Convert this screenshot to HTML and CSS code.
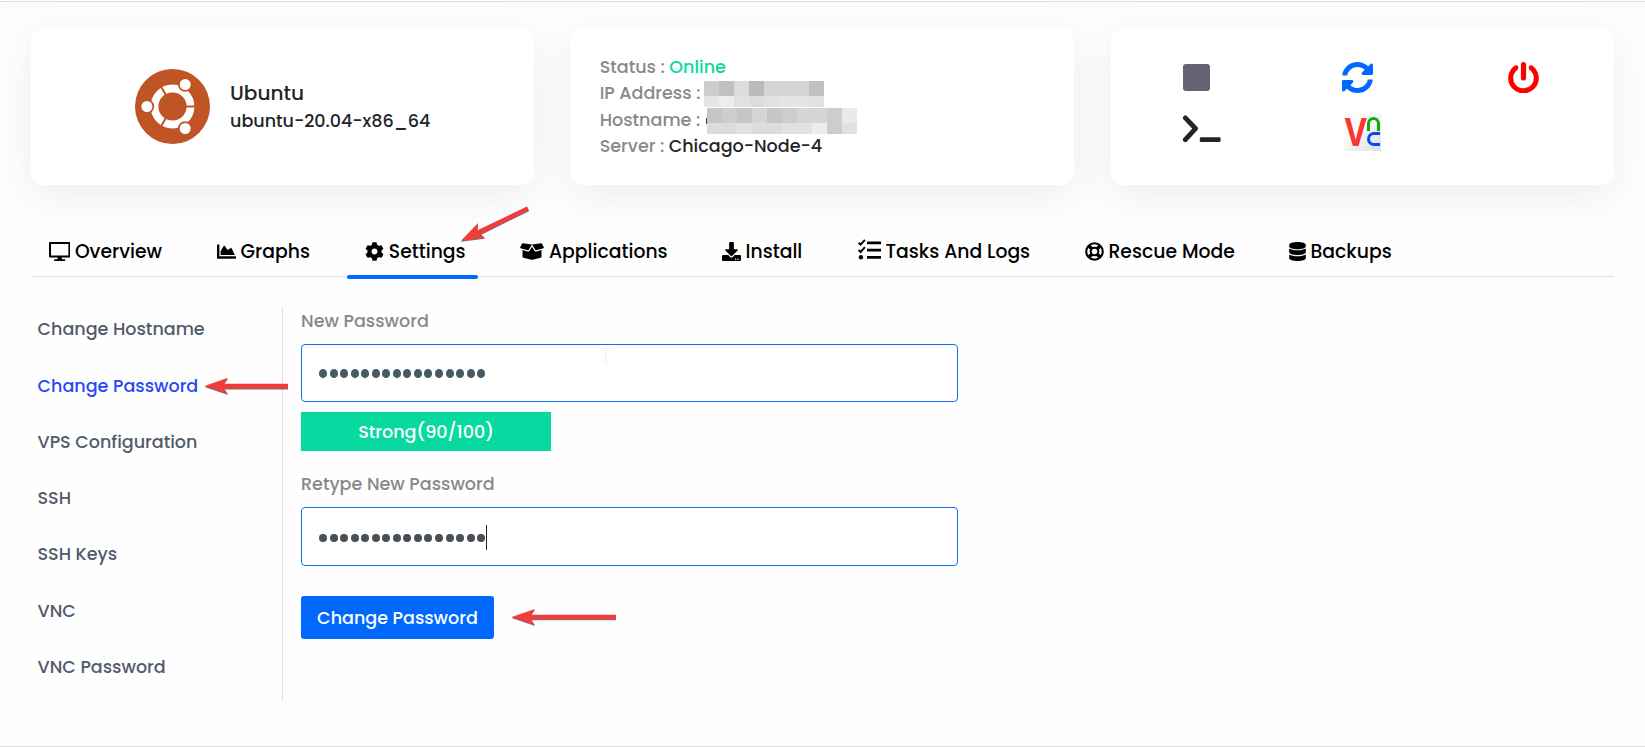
FILE: index.html
```
<!DOCTYPE html>
<html lang="en">
<head>
<meta charset="utf-8">
<title>VPS Settings</title>
<link rel="stylesheet" href="styles.css">
</head>
<body>
<div class="topline"></div>
<main class="page">
  <section class="cards">
    <article class="card os-card">
      <svg class="os-logo" viewBox="0 0 75 75">
        <circle cx="37.500" cy="37.500" r="37.500" fill="#bf5425"/>
        <circle cx="37.500" cy="37.500" r="18" fill="none" stroke="#fff" stroke-width="7.800"/>
        <path d="M37.500 37.500H62M37.500 37.500L25.250 16.300M37.500 37.500L25.250 58.700" stroke="#bf5425" stroke-width="2"/>
        <g fill="#fff" stroke="#bf5425" stroke-width="1.800">
          <circle cx="11.900" cy="37.500" r="6.400"/><circle cx="50.200" cy="15.500" r="6.400"/><circle cx="50.200" cy="59.500" r="6.400"/>
        </g>
      </svg>
      <div>
        <div class="os-name">Ubuntu</div>
        <div class="os-version">ubuntu-20.04-x86_64</div>
      </div>
    </article>

    <article class="card info-card">
      <div class="row"><span class="key key-status">Status :</span><span class="online">Online</span></div>
      <div class="row"><span class="key key-ip">IP Address :</span>
        <span class="mosaic m-ip"><i class="g3"></i><i class="g1"></i><i class="g5"></i><i class="g0"></i><i class="g4"></i><i class="g4"></i><i class="g4"></i><i class="g1"></i><i class="g7"></i><i class="g9"></i><i class="g6"></i><i class="g5"></i><i class="g6"></i><i class="g7"></i><i class="g7"></i><i class="g6"></i></span></div>
      <div class="row"><span class="key key-host">Hostname :</span>
        <span class="mosaic m-host"><i class="g2"></i><i class="g3"></i><i class="g2"></i><i class="g4"></i><i class="g2"></i><i class="g3"></i><i class="g4"></i><i class="g4"></i><i class="g3"></i><i class="g8"></i><i class="g5"></i><i class="g5"></i><i class="g6"></i><i class="g5"></i><i class="g5"></i><i class="g6"></i><i class="g6"></i><i class="g9"></i><i class="g3"></i><i class="g6"></i></span></div>
      <div class="row"><span class="key key-server">Server :</span><span class="server">Chicago-Node-4</span></div>
    </article>

    <article class="card actions">
      <span class="stop"></span>
      <svg class="sync" viewBox="8 8 496 496"><path fill="#0168fe" d="M370.720 133.280C339.458 104.008 298.888 87.962 255.848 88c-77.458.068-144.328 53.178-162.791 126.850-1.344 5.363-6.122 9.150-11.651 9.150H24.103c-7.498 0-13.194-6.807-11.807-14.176C33.933 94.924 134.813 8 256 8c66.448 0 126.791 26.136 171.315 68.685L463.030 40.970C478.149 25.851 504 36.559 504 57.941V192c0 13.255-10.745 24-24 24H345.941c-21.382 0-32.090-25.851-16.971-40.971l41.750-41.749zM32 296h134.059c21.382 0 32.090 25.851 16.971 40.971l-41.750 41.750c31.262 29.273 71.835 45.319 114.876 45.280 77.418-.070 144.315-53.144 162.787-126.849 1.344-5.363 6.122-9.150 11.651-9.150h57.304c7.498 0 13.194 6.807 11.807 14.176C478.067 417.076 377.187 504 256 504c-66.448 0-126.791-26.136-171.315-68.685L48.970 471.030C33.851 486.149 8 475.441 8 454.059V320c0-13.255 10.745-24 24-24z"/></svg>
      <svg class="power" viewBox="0 0 31 31" fill="none" stroke="#fe0000"><path d="M8 5.700A12.800 12.800 0 1 0 23 5.700" stroke-width="5"/><circle cx="8" cy="5.700" r=".9" fill="#fe0000" stroke-width="3"/><circle cx="23" cy="5.700" r=".9" fill="#fe0000" stroke-width="3"/><path d="M15.500 2.600v13.400" stroke-width="5.200" stroke-linecap="round"/></svg>
      <svg class="terminal" viewBox="0 0 40 29" fill="none" stroke="#212529" stroke-width="5"><path d="M3 3L13.500 14 3 25.500" stroke-linecap="round" stroke-linejoin="round"/><rect x="18" y="23" width="21.500" height="5" rx="1.300" fill="#212529" stroke="none"/></svg>
      <span class="vnc"><svg viewBox="0 0 37 38"><text x="0.700" y="33" textLength="22" lengthAdjust="spacingAndGlyphs">V</text></svg><i class="arch-n"></i><i class="arch-c"></i></span>
    </article>
  </section>

  <nav class="tabs">
    <a class="tab t-overview"><svg class="w-desktop" viewBox="0 0 576 512"><path fill="none" stroke="#000" stroke-width="54" stroke-linejoin="round" d="M27 27H549V390H27z"/><path d="M240 400h96l16 64h64q24 0 24 24t-24 24H160q-24 0-24-24t24-24h64z"/></svg><span>Overview</span></a>
    <a class="tab t-graphs"><svg class="w-std" viewBox="0 0 512 512"><path d="M500 384c6.600 0 12 5.400 12 12v40c0 6.600-5.400 12-12 12H12c-6.600 0-12-5.400-12-12V76c0-6.600 5.400-12 12-12h40c6.600 0 12 5.400 12 12v308h436zM372.700 159.500L288 216l-85.300-113.700c-5.100-6.800-15.500-6.300-19.900 1L96 248v104h384l-89.900-187.800c-3.200-6.500-11.400-8.700-17.400-4.700z"/></svg><span>Graphs</span></a>
    <a class="tab t-settings active"><svg class="w-std" viewBox="0 0 512 512"><path d="M487.400 315.700l-42.600-24.600c4.300-23.200 4.300-47 0-70.200l42.600-24.600c4.900-2.800 7.100-8.600 5.500-14-11.100-35.600-30-67.800-54.700-94.600-3.800-4.100-10-5.100-14.800-2.300L380.800 110c-17.900-15.400-38.500-27.300-60.800-35.100V25.800c0-5.600-3.900-10.500-9.400-11.700-36.700-8.200-74.300-7.800-109.200 0-5.500 1.200-9.400 6.100-9.400 11.700V75c-22.200 7.900-42.800 19.800-60.800 35.100L88.700 85.500c-4.900-2.800-11-1.900-14.800 2.300-24.700 26.700-43.600 58.900-54.700 94.600-1.700 5.400.6 11.200 5.500 14L67.300 221c-4.300 23.200-4.300 47 0 70.200l-42.600 24.600c-4.900 2.800-7.100 8.600-5.500 14 11.100 35.600 30 67.800 54.700 94.600 3.800 4.100 10 5.100 14.800 2.300l42.600-24.600c17.900 15.400 38.500 27.300 60.800 35.100v49.200c0 5.600 3.900 10.500 9.400 11.700 36.700 8.200 74.300 7.800 109.200 0 5.500-1.200 9.400-6.100 9.400-11.700v-49.200c22.200-7.900 42.800-19.800 60.800-35.100l42.600 24.600c4.900 2.800 11 1.900 14.800-2.300 24.700-26.700 43.600-58.900 54.700-94.600 1.500-5.500-.7-11.300-5.600-14.100zM256 336c-44.100 0-80-35.900-80-80s35.900-80 80-80 80 35.900 80 80-35.900 80-80 80z"/></svg><span>Settings</span></a>
    <a class="tab t-apps"><svg class="w-box" viewBox="0 0 640 512"><path d="M425.700 256c-16.900 0-32.800-9-41.400-23.400L320 126l-64.200 106.600c-8.700 14.500-24.600 23.500-41.500 23.500-4.500 0-9-.6-13.300-1.900L64 215v178c0 14.700 10 27.500 24.200 31l216.200 54.100c10.200 2.500 20.900 2.500 31 0L551.800 424c14.200-3.600 24.200-16.400 24.200-31V215l-137 39.100c-4.300 1.300-8.800 1.900-13.300 1.900zm212.600-112.200L586.800 41c-3.100-6.200-9.800-9.800-16.700-8.900L320 64l91.700 152.100c3.800 6.300 11.400 9.300 18.500 7.300l197.900-56.500c9.900-2.900 14.700-13.900 10.200-23.100zM53.200 41L1.700 143.800c-4.600 9.200.3 20.200 10.100 23l197.900 56.500c7.100 2 14.700-1 18.500-7.300L320 64 69.800 32.100c-6.900-.8-13.500 2.700-16.600 8.900z"/></svg><span>Applications</span></a>
    <a class="tab t-install"><svg class="w-std" viewBox="0 0 512 512"><path d="M216 0h80c13.300 0 24 10.700 24 24v168h87.700c17.800 0 26.700 21.500 14.100 34.100L269.700 378.300c-7.500 7.500-19.800 7.500-27.300 0L90.100 226.100c-12.600-12.600-3.700-34.100 14.100-34.100H192V24c0-13.300 10.700-24 24-24zm296 376v112c0 13.300-10.700 24-24 24H24c-13.300 0-24-10.700-24-24V376c0-13.300 10.700-24 24-24h146.700l49 49c20.100 20.100 52.500 20.100 72.600 0l49-49H488c13.300 0 24 10.700 24 24zm-124 88c0-11-9-20-20-20s-20 9-20 20 9 20 20 20 20-9 20-20zm64 0c0-11-9-20-20-20s-20 9-20 20 9 20 20 20 20-9 20-20z"/></svg><span>Install</span></a>
    <a class="tab t-tasks"><svg class="w-tasks" viewBox="0 0 23 22"><path fill="none" stroke="#000" stroke-width="2" d="M.6 3.600l2 2L6.900.8M.6 11l2 2 4.300-4.800"/><circle cx="2.900" cy="18.200" r="2.200"/><path d="M9 2.500h14v2.800H9zM9 9.800h14v2.800H9zM9 17h14v2.800H9z"/></svg><span>Tasks And Logs</span></a>
    <a class="tab t-rescue"><svg class="w-ring" viewBox="0 0 20 20" fill="none" stroke="#000"><circle cx="10" cy="10" r="8.700" stroke-width="2.200"/><circle cx="10" cy="10" r="4" stroke-width="2.200"/><path stroke-width="3.800" d="M3.900 3.900l3.300 3.300M16.100 3.900l-3.300 3.300M3.900 16.100l3.300-3.300M16.100 16.100l-3.300-3.300"/></svg><span>Rescue Mode</span></a>
    <a class="tab t-backups"><svg class="w-db" viewBox="0 0 448 512"><path d="M448 73.143v45.714C448 159.143 347.667 192 224 192S0 159.143 0 118.857V73.143C0 32.857 100.333 0 224 0s224 32.857 224 73.143zM448 176v102.857C448 319.143 347.667 352 224 352S0 319.143 0 278.857V176c48.125 33.143 136.208 48.572 224 48.572S399.874 209.143 448 176zm0 160v102.857C448 479.143 347.667 512 224 512S0 479.143 0 438.857V336c48.125 33.143 136.208 48.572 224 48.572S399.874 369.143 448 336z"/></svg><span>Backups</span></a>
  </nav>

  <section class="content">
    <ul class="side">
      <li>Change Hostname</li>
      <li class="current">Change Password</li>
      <li>VPS Configuration</li>
      <li>SSH</li>
      <li>SSH Keys</li>
      <li>VNC</li>
      <li>VNC Password</li>
    </ul>
    <form class="form">
      <label>New Password</label>
      <div class="field"><span class="dots"><i></i><i></i><i></i><i></i><i></i><i></i><i></i><i></i><i></i><i></i><i></i><i></i><i></i><i></i><i></i><i></i></span></div>
      <div class="strength">Strong(90/100)</div>
      <label>Retype New Password</label>
      <div class="field second"><span class="dots"><i></i><i></i><i></i><i></i><i></i><i></i><i></i><i></i><i></i><i></i><i></i><i></i><i></i><i></i><i></i><i></i></span><span class="caret"></span></div>
      <button type="button" class="submit">Change Password</button>
    </form>
  </section>
</main>
<footer class="bottomline"></footer>

<svg class="marks" viewBox="0 0 1645 747">
  <path fill="none" stroke="#f0f0f0" d="M602 348.500h2.500l1 1 1-1h2.500M605.500 349v14M602 363.500h2.500l1-1 1 1h2.500"/>
  <g class="arrow">
    <path d="M461 240.800L478 223 477.500 230.300 527 206.500 529 210.200 480.500 234.200 485 237.800z"/>
    <path d="M204.500 386L228 377.700 224 383.700H288V388.500H224L228 394z"/>
    <path d="M511.500 617L535 609 531 614.700H616V619.300H531L535 625z"/>
  </g>
</svg>
</body>
</html>
```
FILE: styles.css
```
* { box-sizing: border-box; }
body {
  margin: 0;
  height: 747px;
  overflow: hidden;
  display: flex;
  flex-direction: column;
  background: #fefefe;
  color: #212529;
  font: 500 17.550px/26px Poppins, Inter, sans-serif;
}
.topline { height: 2px; flex: none; border-bottom: 1px solid #dcdede; box-shadow: 0 2px 8px rgba(0, 0, 0, .06); }
.bottomline { height: 1px; background: #dcdfe3; }
.page { flex: 1; padding: 26px 31px 0; }

.cards { display: grid; grid-template-columns: repeat(3, 503px); gap: 37px; }
.card { height: 157px; background: #fff; border-radius: 12px; box-shadow: 0 10px 40px rgba(40, 60, 50, .085); }
.os-card { display: flex; align-items: center; gap: 20px; padding-left: 104px; }
.os-logo { width: 75px; height: 75px; }
.os-name { margin-top: -1px; font-size: 20.100px; line-height: 28px; }
.os-version { margin-top: 1px; }

.info-card { padding: 25.500px 0 0 28.700px; }
.row { display: flex; height: 26.400px; line-height: 26.400px; white-space: nowrap; }
.key { color: #888; flex: none; }
.key-status { width: 69.600px; }
.key-ip { width: 104.300px; }
.key-host { width: 107.300px; padding-top: .6px; }
.key-server { width: 69px; }
.online { color: #08d9a0; }
.mosaic { display: grid; grid-template-rows: 15px 11px; height: 26px; }
.m-ip { grid-template-columns: repeat(8, 15px); margin-top: 1px; }
.m-host { position: relative; grid-template-columns: repeat(10, 15px); margin-top: 2px; }
.m-host::before { content: ""; position: absolute; left: -1px; top: 10px; width: 1px; height: 6px; background: #3c4044; }
.g0 { background: #b9babb; }
.g1 { background: #bfc0c2; }
.g2 { background: #c5c6c8; }
.g3 { background: #cdcdce; }
.g4 { background: #d4d5d6; }
.g5 { background: #dbdcdd; }
.g6 { background: #e0e1e1; }
.g7 { background: #e4e5e5; }
.g8 { background: #e9eae9; }
.g9 { background: #eceeed; }

.actions { display: grid; grid-template-columns: 160px 166px 1fr; grid-template-rows: 52px 40px; align-items: start; padding: 33px 0 0 71px; }
.stop { width: 27px; height: 27px; margin: 3px 0 0 1px; border-radius: 3px; background: #666273; }
.sync { width: 31px; height: 31px; margin-top: 1px; }
.power { width: 31px; height: 31px; margin-top: 1px; }
.terminal { width: 39.500px; height: 28px; margin-top: 2px; }
.vnc { position: relative; width: 37px; height: 38px; margin-left: 2px; background: linear-gradient(135deg, #fafafa 40%, #dedede); }
.vnc svg { display: block; width: 37px; height: 38px; overflow: visible; }
.vnc text { font: 700 40px "Open Sans", sans-serif; fill: #fb3434; }
.arch-n, .arch-c { position: absolute; left: 22.500px; width: 13px; height: 14px; }
.arch-n { top: 4px; border: 3px solid #0aad0a; border-bottom: 0; border-radius: 7px 7px 0 0; }
.arch-c { top: 19px; border: 3px solid #0a47fb; border-right: 0; border-radius: 7px 0 0 7px; }

.tabs {
  display: grid;
  grid-template-columns: 168px 149px 154.500px 201.500px 136px 227px 204px 1fr;
  height: 50px;
  margin-top: 42px;
  border-bottom: 1px solid #dee2e6;
  color: #000;
  font-size: 18.800px;
}
.tab { position: relative; display: flex; align-items: center; padding: 0 0 0 17.500px; white-space: nowrap; }
.tab svg { flex: none; height: 19px; }
.w-desktop { width: 21.400px; margin-right: 5px; }
.w-std { width: 19px; margin-right: 5px; }
.t-settings .w-std { margin: 0 5.300px 0 -1px; }
.w-box { width: 24px; margin-right: 5px; }
.tab .w-tasks { width: 23px; height: 22px; margin: -3px 5px 0 0; }
.w-ring { width: 19px; margin-right: 5px; }
.w-db { width: 17px; margin-right: 5px; }
.active::after { content: ""; position: absolute; left: -1px; bottom: -3px; width: 131px; height: 4px; border-radius: 2px; background: #0168fe; }

.content { display: flex; margin-top: 30px; }
.side { list-style: none; margin: 0; width: 252px; height: 394px; padding: 8.900px 0 0 6.500px; border-right: 1px solid #dedfe1; color: #515b6c; }
.side li { height: 56.350px; line-height: 27px; }
.side .current { padding-top: .4px; color: #2a47f8; }

.form { width: 657px; margin-left: 18px; }
.form label { display: block; height: 37px; line-height: 29px; color: #888; }
.field { display: flex; align-items: center; height: 58px; padding: 1px 0 0 17px; border: 1px solid #0d6ef5; border-radius: 4px; background: #fff; }
.second { height: 59px; padding-top: 3px; }
.dots { display: flex; gap: 2.550px; color: #455a64; }
.second .dots { color: #495057; }
.dots i { width: 8px; height: 8.500px; border-radius: 50%; background: currentColor; }
.caret { width: 1px; height: 25px; margin: -2px 0 0 1px; background: #222; }
.strength { width: 250px; height: 39px; margin: 10px 0 19px; background: #08d9a0; color: #fff; text-align: center; line-height: 40px; }
.submit { display: block; width: 193px; height: 43px; margin-top: 30px; padding: 1px 0 0; border: 0; border-radius: 3px; background: #0168fe; color: #fff; font: inherit; }

.marks { position: absolute; inset: 0; width: 1645px; height: 747px; pointer-events: none; }
.arrow { fill: #f23c3c; filter: drop-shadow(0 1px .5px rgba(0, 0, 0, .55)); }
```
